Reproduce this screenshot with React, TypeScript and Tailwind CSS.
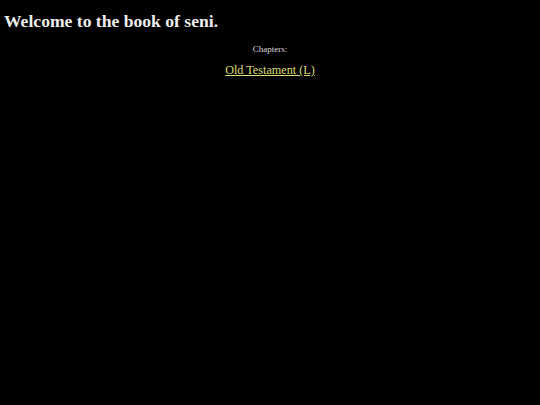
export default function App() {
  return (
    <div className="min-h-[405px] bg-black px-[4px] pt-[10px] text-[#eeeeee]" style={{ fontFamily: '"Liberation Serif", "Times New Roman", serif' }}>
      <h1 className="text-[17.6px] font-bold leading-[22px]">Welcome to the book of seni.</h1>
      <div className="mt-[12px] text-center text-[9px] leading-[11px] text-[#dddddd]">Chapters:</div>
      <div className="mt-[8px] text-center text-[12.2px] leading-[15px]">
        <a href="#" className="text-[#dddd77] underline">Old Testament (L)</a>
      </div>
    </div>
  );
}
